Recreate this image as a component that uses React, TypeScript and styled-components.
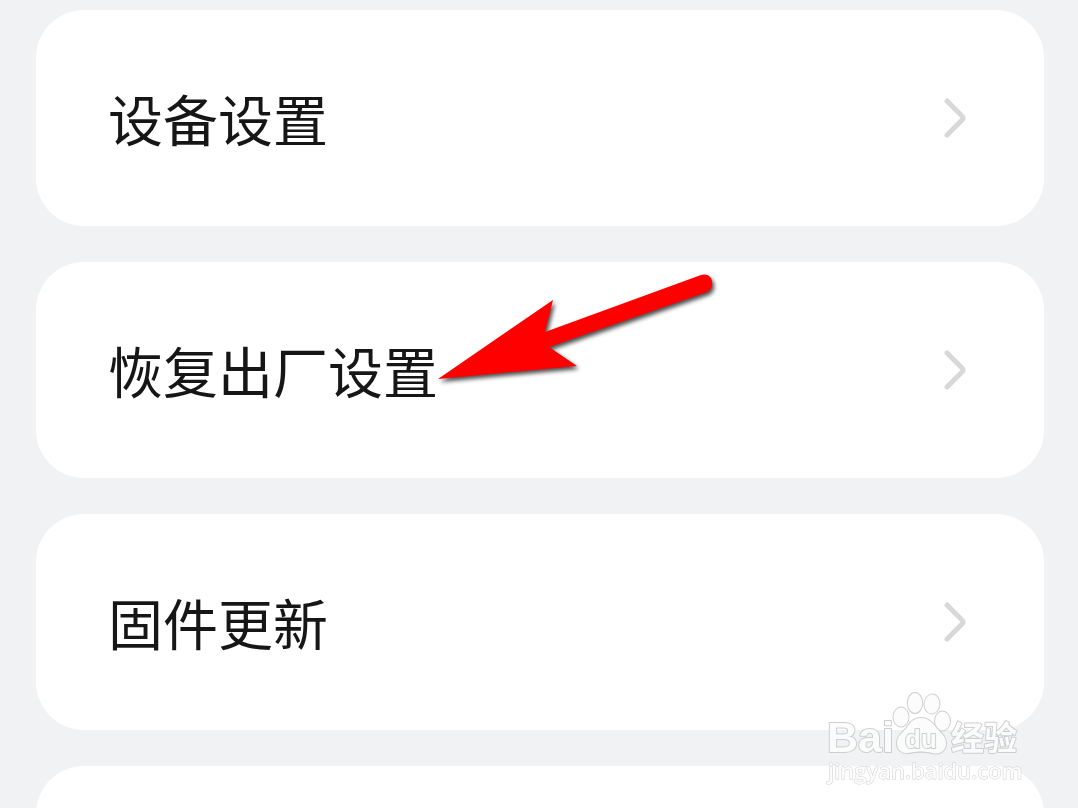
import React from "react";
import styled, { createGlobalStyle } from "styled-components";

const GlobalStyle = createGlobalStyle`
  * { box-sizing: border-box; }
  body {
    margin: 0;
    background: #f1f2f4;
    font-family: "Noto Sans CJK SC", "Noto Sans", sans-serif;
  }
`;

const Page = styled.main`
  position: relative;
  height: 100vh;
  overflow: hidden;
  padding: 10px 34px 0 36px;
`;

const List = styled.nav`
  display: flex;
  flex-direction: column;
  gap: 36px;
`;

const Row = styled.button`
  display: flex;
  align-items: center;
  justify-content: space-between;
  flex: none;
  width: 100%;
  height: 216px;
  padding: 0 76px 0 72px;
  border: 0;
  border-radius: 48px;
  background: #fff;
  color: #161616;
  font: inherit;
  text-align: left;
  cursor: pointer;
`;

const Label = styled.span`
  position: relative;
  padding-bottom: 2px;
  font-size: 55px;
  line-height: 80px;
  white-space: nowrap;
`;

const Chevron = styled.svg`
  flex: none;
  width: 24px;
  height: 44px;
  fill: none;
  stroke: #d8d8d8;
  stroke-width: 5;
  stroke-linecap: round;
  stroke-linejoin: round;
`;

const Arrow = styled.svg`
  position: absolute;
  left: 100%;
  bottom: 21px;
  width: 290px;
  height: 120px;
  overflow: visible;
  pointer-events: none;
  filter: drop-shadow(2px 3px 2px rgba(0, 0, 0, 0.7));
`;

const Watermark = styled.svg`
  position: absolute;
  right: 50px;
  bottom: 20px;
  width: 204px;
  height: 100px;
  pointer-events: none;
  fill: #fcfcfc;
  stroke: #c9cacb;
  stroke-width: 2;
  stroke-linejoin: round;
  paint-order: stroke;
  opacity: 0.9;
`;

function Pointer() {
  return (
    <Arrow viewBox="0 0 290 120" aria-hidden="true">
      <path
        fill="#fe0000"
        d="M0 109 L115 30 L107 62 L263 5 C269 3 274 7 274 12 C275 16 273 20 269 22 L111 77 L139 96 Z"
      />
    </Arrow>
  );
}

function BaiduMark() {
  return (
    <Watermark viewBox="0 0 204 100" role="img" aria-label="Baidu 经验 jingyan.baidu.com">
      <text x="3" y="64" fontFamily="Liberation Sans, sans-serif" fontWeight="700" fontSize="43">Bai</text>
      <ellipse cx="77" cy="29" rx="7.5" ry="9.5" />
      <ellipse cx="91" cy="15" rx="7.2" ry="10" />
      <ellipse cx="108" cy="16" rx="7.5" ry="9.5" transform="rotate(5 108 16)" />
      <ellipse cx="118.5" cy="33" rx="7.5" ry="9.5" />
      <path d="M97 30 C91 30 87 33 84 38 C80 44 73 47 73 55 C73 62 78 66 85 65 C94 63 100 63 108 65 C117 67 122 62 122 55 C122 47 115 44 111 38 C107 33 103 30 97 30 Z" />
      <text x="81" y="60" fontFamily="Liberation Sans, sans-serif" fontWeight="700" fontSize="26">du</text>
      <text x="127" y="62" fontFamily="Noto Sans CJK SC, sans-serif" fontWeight="700" fontSize="33">经验</text>
      <text x="4" y="91" fontFamily="Open Sans, sans-serif" fontWeight="600" fontSize="22" strokeWidth="1">jingyan.baidu.com</text>
    </Watermark>
  );
}

const items = [
  { label: "设备设置" },
  { label: "恢复出厂设置", pointed: true },
  { label: "固件更新" },
  { label: "", name: "更多" },
];

export default function App() {
  return (
    <>
      <GlobalStyle />
      <Page>
        <List aria-label="设置">
          {items.map((item, i) => (
            <Row key={i} type="button" aria-label={item.name}>
              <Label>
                {item.label}
                {item.pointed && <Pointer />}
              </Label>
              <Chevron viewBox="0 0 24 44" aria-hidden="true">
                <path d="M3 5 L18 20 Q20 22 18 24 L3 39" />
              </Chevron>
            </Row>
          ))}
        </List>
        <BaiduMark />
      </Page>
    </>
  );
}
